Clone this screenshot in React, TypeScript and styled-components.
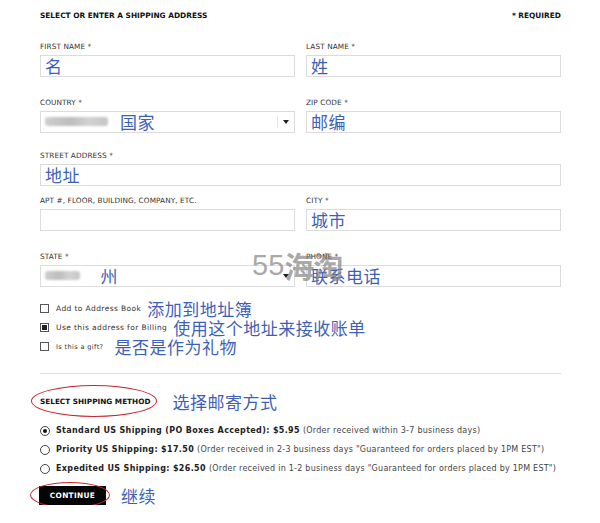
import styled, { createGlobalStyle } from "styled-components";

const GlobalStyle = createGlobalStyle`
  body {
    margin: 0;
    background: #fff;
    font-family: "DejaVu Sans", Verdana, sans-serif;
    color: #222;
  }
`;

const Page = styled.div`
  position: relative;
  width: 521px;
  padding: 10px 39px 0 40px;
`;

const Header = styled.div`
  display: flex;
  justify-content: space-between;
  align-items: center;
  height: 10px;
  font-size: 7.4px;
  font-weight: bold;
  color: #111;
`;

const Row = styled.div<{ $top: number }>`
  display: grid;
  grid-template-columns: 255px 255px;
  column-gap: 11px;
  margin-top: ${(p) => p.$top}px;
`;

const Field = styled.div<{ $wide?: boolean }>`
  display: flex;
  flex-direction: column;
  grid-column: ${(p) => (p.$wide ? "1 / span 2" : "auto")};
`;

const Label = styled.span`
  height: 10px;
  line-height: 10px;
  margin-bottom: 3px;
  font-size: 7.3px;
  color: #333;
  letter-spacing: 0.1px;
`;

const Box = styled.div`
  box-sizing: border-box;
  height: 22px;
  border: 1px solid #dcdcdc;
  display: flex;
  align-items: center;
  padding: 0 0 2px 4px;
  position: relative;
`;

const Zh = styled.span<{ $size?: number }>`
  font-family: "Noto Sans CJK SC", sans-serif;
  font-size: ${(p) => p.$size ?? 17}px;
  color: #3e5fb8;
  letter-spacing: 0.5px;
  line-height: 1;
  white-space: nowrap;
`;

const Blur = styled.div<{ $w: number }>`
  width: ${(p) => p.$w}px;
  height: 9px;
  border-radius: 3px;
  background: linear-gradient(90deg, #cfcfcf, #bdbdbd 40%, #d2d2d2 70%, #c6c6c6);
  filter: blur(1px);
  margin-right: 12px;
`;

const Arrow = styled.div`
  position: absolute;
  right: 5px;
  top: 8px;
  width: 0;
  height: 0;
  border-left: 3px solid transparent;
  border-right: 3px solid transparent;
  border-top: 4px solid #222;
`;

const ArrowSep = styled.div`
  position: absolute;
  right: 16px;
  top: 4px;
  bottom: 4px;
  width: 1px;
  background: #e6e6e6;
`;

const Watermark = styled.div`
  position: absolute;
  left: 252px;
  top: 243px;
  display: flex;
  align-items: center;
  color: rgba(130, 130, 130, 0.7);
  pointer-events: none;
`;

const WmDigits = styled.span`
  font-family: "Liberation Sans", sans-serif;
  font-size: 29px;
`;

const WmZh = styled.span`
  font-family: "Noto Sans CJK SC", sans-serif;
  font-size: 30px;
  font-weight: bold;
  letter-spacing: -1px;
`;

const Checks = styled.div`
  margin-top: 12px;
  display: flex;
  flex-direction: column;
`;

const CheckRow = styled.div`
  display: flex;
  align-items: center;
  height: 19px;
`;

const CheckBox = styled.span<{ $on?: boolean }>`
  box-sizing: border-box;
  width: 9px;
  height: 9px;
  border: 1px solid #555;
  margin-right: 7px;
  padding: 1px;
  display: flex;
  &::after {
    content: "";
    flex: 1;
    background: ${(p) => (p.$on ? "#222" : "transparent")};
  }
`;

const SmallText = styled.span<{ $size?: number; $gap?: number }>`
  font-size: ${(p) => p.$size ?? 7.5}px;
  color: #333;
  letter-spacing: 0.4px;
  margin-right: ${(p) => p.$gap ?? 6}px;
`;

const Divider = styled.hr`
  margin: 17px 0 0;
  border: none;
  border-top: 1px solid #dedede;
`;

const MethodRow = styled.div`
  display: flex;
  align-items: center;
  height: 20px;
  margin-top: 17px;
`;

const MethodTitle = styled.span`
  position: relative;
  font-size: 7.3px;
  font-weight: bold;
  color: #111;
  margin-right: 22px;
  &::before {
    content: "";
    position: absolute;
    left: -9px;
    right: -7px;
    top: -12px;
    bottom: -11px;
    border: 1.5px solid #c9262e;
    border-radius: 50%;
  }
`;

const Radios = styled.div`
  margin-top: 10px;
  display: flex;
  flex-direction: column;
`;

const RadioRow = styled.div`
  display: flex;
  align-items: center;
  height: 19px;
  font-size: 8px;
  color: #222;
  white-space: nowrap;
`;

const RadioDot = styled.span<{ $on?: boolean }>`
  box-sizing: border-box;
  width: 10px;
  height: 10px;
  border: 1px solid #444;
  border-radius: 50%;
  margin-right: 6px;
  padding: 2px;
  display: flex;
  &::after {
    content: "";
    flex: 1;
    border-radius: 50%;
    background: ${(p) => (p.$on ? "#111" : "transparent")};
  }
`;

const Strong = styled.b`
  letter-spacing: 0.35px;
  margin-right: 3px;
`;

const Note = styled.span`
  color: #444;
  letter-spacing: 0.25px;
`;

const Actions = styled.div`
  display: flex;
  align-items: center;
  margin-top: 8px;
  height: 19px;
`;

const Continue = styled.button`
  position: relative;
  height: 19px;
  width: 67px;
  margin-left: -1px;
  margin-right: 15px;
  border: none;
  background: #050505;
  color: #fff;
  font-family: "DejaVu Sans", sans-serif;
  font-size: 7.4px;
  font-weight: bold;
  letter-spacing: 0.3px;
  padding: 0;
  &::before {
    content: "";
    position: absolute;
    left: -9px;
    right: -4px;
    top: -4px;
    bottom: -3px;
    border: 1.5px solid #c9262e;
    border-radius: 50%;
  }
`;

type Shipping = { name: string; price: string; note: string; on?: boolean };

const shipping: Shipping[] = [
  {
    name: "Standard US Shipping (PO Boxes Accepted):",
    price: "$5.95",
    note: "(Order received within 3-7 business days)",
    on: true,
  },
  {
    name: "Priority US Shipping:",
    price: "$17.50",
    note: '(Order received in 2-3 business days "Guaranteed for orders placed by 1PM EST")',
  },
  {
    name: "Expedited US Shipping:",
    price: "$26.50",
    note: '(Order received in 1-2 business days "Guaranteed for orders placed by 1PM EST")',
  },
];

const App = () => {
  return (
    <>
      <GlobalStyle />
      <Page>
        <Header>
          <span>SELECT OR ENTER A SHIPPING ADDRESS</span>
          <span>* REQUIRED</span>
        </Header>

        <Row $top={22}>
          <Field>
            <Label>FIRST NAME *</Label>
            <Box>
              <Zh>名</Zh>
            </Box>
          </Field>
          <Field>
            <Label>LAST NAME *</Label>
            <Box>
              <Zh>姓</Zh>
            </Box>
          </Field>
        </Row>

        <Row $top={21}>
          <Field>
            <Label>COUNTRY *</Label>
            <Box>
              <Blur $w={63} />
              <Zh>国家</Zh>
              <ArrowSep />
              <Arrow />
            </Box>
          </Field>
          <Field>
            <Label>ZIP CODE *</Label>
            <Box>
              <Zh>邮编</Zh>
            </Box>
          </Field>
        </Row>

        <Row $top={18}>
          <Field $wide>
            <Label>STREET ADDRESS *</Label>
            <Box>
              <Zh>地址</Zh>
            </Box>
          </Field>
        </Row>

        <Row $top={10}>
          <Field>
            <Label>APT #, FLOOR, BUILDING, COMPANY, ETC.</Label>
            <Box />
          </Field>
          <Field>
            <Label>CITY *</Label>
            <Box>
              <Zh>城市</Zh>
            </Box>
          </Field>
        </Row>

        <Row $top={21}>
          <Field>
            <Label>STATE *</Label>
            <Box>
              <Blur $w={35} />
              <Zh>&nbsp;&nbsp;州</Zh>
              <Arrow />
            </Box>
          </Field>
          <Field>
            <Label>PHONE *</Label>
            <Box>
              <Zh>联系电话</Zh>
            </Box>
          </Field>
        </Row>

        <Watermark>
          <WmDigits>55</WmDigits>
          <WmZh>海淘</WmZh>
        </Watermark>

        <Checks>
          <CheckRow>
            <CheckBox />
            <SmallText>Add to Address Book</SmallText>
            <Zh>添加到地址簿</Zh>
          </CheckRow>
          <CheckRow>
            <CheckBox $on />
            <SmallText>Use this address for Billing</SmallText>
            <Zh>使用这个地址来接收账单</Zh>
          </CheckRow>
          <CheckRow>
            <CheckBox />
            <SmallText $size={6.5} $gap={11}>
              Is this a gift?
            </SmallText>
            <Zh>是否是作为礼物</Zh>
          </CheckRow>
        </Checks>

        <Divider />

        <MethodRow>
          <MethodTitle>SELECT SHIPPING METHOD</MethodTitle>
          <Zh>选择邮寄方式</Zh>
        </MethodRow>

        <Radios>
          {shipping.map((s) => (
            <RadioRow key={s.name}>
              <RadioDot $on={s.on} />
              <Strong>
                {s.name} {s.price}
              </Strong>
              <Note>{s.note}</Note>
            </RadioRow>
          ))}
        </Radios>

        <Actions>
          <Continue>CONTINUE</Continue>
          <Zh>继续</Zh>
        </Actions>
      </Page>
    </>
  );
};

export default App;
